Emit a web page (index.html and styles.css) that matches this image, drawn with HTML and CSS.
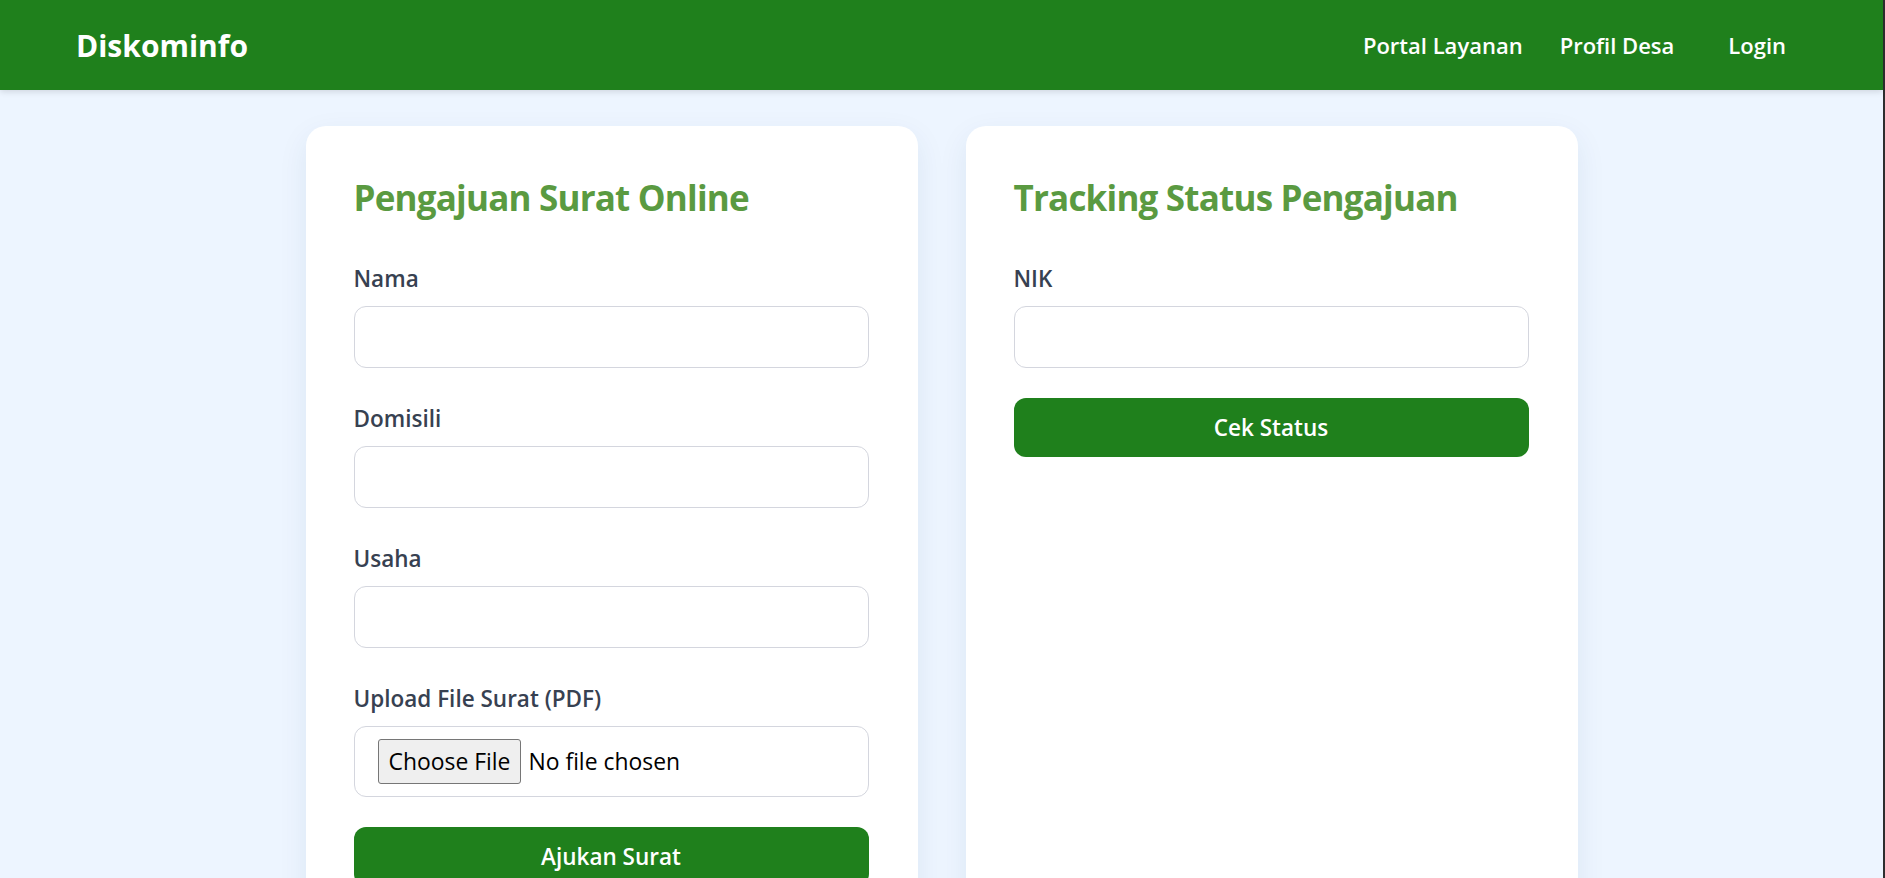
FILE: index.html
```html
<!DOCTYPE html>
<html lang="id">
<head>
<meta charset="utf-8">
<title>Diskominfo - Layanan Surat</title>
<link rel="stylesheet" href="styles.css">
</head>
<body>
<div class="page">
  <nav class="navbar">
    <div class="brand">Diskominfo</div>
    <div class="nav-links">
      <a class="nav-link" href="#">Portal Layanan</a>
      <a class="nav-link" href="#">Profil Desa</a>
      <a class="nav-link nav-login" href="#">Login</a>
    </div>
  </nav>
  <main class="main">
    <div class="grid">
      <section class="card">
        <h2 class="card-title">Pengajuan Surat Online</h2>
        <div class="field">
          <label class="label">Nama</label>
          <input class="input" type="text">
        </div>
        <div class="field">
          <label class="label">Domisili</label>
          <input class="input" type="text">
        </div>
        <div class="field">
          <label class="label">Usaha</label>
          <input class="input" type="text">
        </div>
        <div class="field field-file">
          <label class="label">Upload File Surat (PDF)</label>
          <input class="file-input" type="file" accept="application/pdf">
        </div>
        <button class="btn" type="button">Ajukan Surat</button>
      </section>
      <section class="card">
        <h2 class="card-title">Tracking Status Pengajuan</h2>
        <div class="field field-nik">
          <label class="label">NIK</label>
          <input class="input" type="text">
        </div>
        <button class="btn" type="button">Cek Status</button>
      </section>
    </div>
  </main>
</div>
<div class="edge"></div>
</body>
</html>
```

FILE: styles.css
```css
* { box-sizing: border-box; }

html, body {
  margin: 0;
  padding: 0;
}

body {
  display: flex;
  min-height: 100vh;
  background: #edf5ff;
  font-family: "Open Sans", "Noto Sans", sans-serif;
  overflow: hidden;
}

.page {
  flex: 1;
  min-width: 0;
}

.edge {
  width: 2px;
  background: #2e2e2e;
  flex: none;
}

.navbar {
  height: 90px;
  background: #1f801c;
  display: flex;
  align-items: center;
  justify-content: space-between;
  padding: 0 97px 0 76px;
  box-shadow: 0 2px 6px rgba(0, 0, 0, 0.12);
  position: relative;
}

.brand {
  color: #ffffff;
  font-size: 30px;
  font-weight: 700;
}

.nav-links {
  display: flex;
  align-items: center;
  gap: 37px;
}

.nav-link {
  color: #ffffff;
  text-decoration: none;
  font-size: 22px;
  font-weight: 600;
}

.nav-login {
  margin-left: 17px;
}

.main {
  padding-top: 36px;
}

.grid {
  width: 1272px;
  margin: 0 auto;
  display: grid;
  grid-template-columns: 1fr 1fr;
  gap: 48px;
}

.card {
  background: #ffffff;
  border-radius: 20px;
  padding: 49px 49px 49px 48px;
  box-shadow: 0 10px 30px rgba(30, 60, 120, 0.08);
}

.card-title {
  margin: 0 0 41px;
  font-size: 35px;
  line-height: 45px;
  font-weight: 700;
  color: #5a9a41;
  letter-spacing: -0.8px;
}

.field {
  margin-bottom: 33px;
}

.field-file {
  margin-bottom: 30px;
}

.field-nik {
  margin-bottom: 30px;
}

.label {
  display: block;
  font-size: 22.5px;
  line-height: 35px;
  font-weight: 600;
  color: #374151;
  margin-bottom: 10px;
}

.input {
  display: block;
  width: 100%;
  height: 62px;
  border: 1.5px solid #d4d6de;
  border-radius: 12px;
  background: #ffffff;
  font: inherit;
  font-size: 20px;
  padding: 0 18px;
  outline: none;
}

.file-input {
  display: block;
  width: 100%;
  height: 71px;
  border: 1.5px solid #d4d6de;
  border-radius: 12px;
  background: #ffffff;
  padding: 12px 23px;
  font-family: "Open Sans", "Noto Sans", sans-serif;
  font-size: 22.9px;
  color: #000000;
}

.file-input::file-selector-button {
  height: 45px;
  margin: 0 7px 0 0;
  padding: 0 10px;
  background: #efefef;
  border: 1px solid #767676;
  border-radius: 3px;
  font-family: inherit;
  font-size: 22.9px;
  color: #000000;
}

.btn {
  display: block;
  width: 100%;
  height: 59px;
  border: none;
  border-radius: 12px;
  background: #1f801c;
  color: #ffffff;
  font-family: inherit;
  font-size: 22.5px;
  font-weight: 600;
  cursor: pointer;
}
```
